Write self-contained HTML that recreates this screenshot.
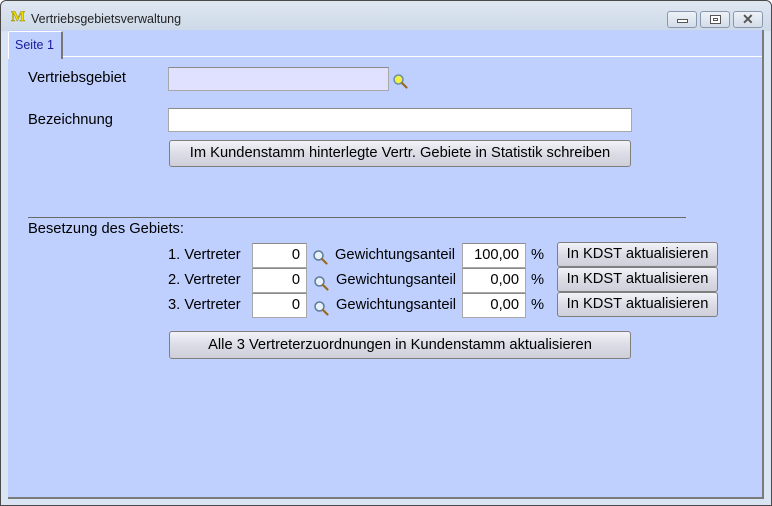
<!DOCTYPE html>
<html><head><meta charset="utf-8"><style>
*{margin:0;padding:0;box-sizing:border-box}
body{width:772px;height:506px;overflow:hidden;font-family:"Liberation Sans",Arial,sans-serif;font-size:14.7px;color:#000;background:#fff}
.win{position:absolute;left:0;top:0;width:772px;height:506px;border:1px solid #4a4a4a;border-radius:6px 6px 0 0;background:#dae5f3}
.title{position:absolute;left:0;top:0;width:770px;height:30px;background:linear-gradient(#dfe7f1,#cdd9e8);border-radius:6px 6px 0 0}
.title span{position:absolute;left:30px;top:11px;font-size:12.5px;color:#222}
.logo{position:absolute;left:10px;top:8px;font-family:"Liberation Serif",serif;font-weight:bold;font-size:15px;color:#f0e000;-webkit-text-stroke:.5px #998800}
.tb{position:absolute;top:10px;width:30px;height:17px;border:1px solid #8a98ad;border-radius:3px;background:linear-gradient(#eef2f8,#d3dce8)}
.a{position:absolute}
.panel{position:absolute;left:8px;top:30px;width:756px;height:469px;background:#bfd0ff;border-right:2px solid #7a7a7a;border-bottom:2px solid #7a7a7a}
.hdr{position:absolute;left:0;top:0;width:754px;height:27px;border-bottom:1px solid #fff}
.tab{position:absolute;left:0;top:1px;width:55px;height:28px;background:#bfd0ff;border-left:1px solid #fff;border-top:1px solid #fff;border-right:2px solid #777;border-radius:2px 2px 0 0}
.tab span{position:absolute;left:6px;top:6px;font-size:12.5px;color:#1a1a9a}
.inp{position:absolute;background:#fff;border:1px solid #a8a8a8;border-top-color:#8a8a8a;text-align:right;padding-right:6px;line-height:22px}
.btn{position:absolute;border:1px solid #7e7e7e;border-radius:3px;background:linear-gradient(#f2f2f8,#dcdce6 50%,#cfcfda);text-align:center;line-height:24px}
.mag{position:absolute;width:16px;height:16px}
</style></head><body>
<div class="win">
<div class="title"><div class="logo">M</div><span>Vertriebsgebietsverwaltung</span>
<div class="tb" style="left:666px"><div class="a" style="left:9px;top:7px;width:11px;height:4px;border:1px solid #555;background:#fff"></div></div>
<div class="tb" style="left:699px"><div class="a" style="left:9px;top:3px;width:11px;height:9px;border:1px solid #555;background:#fff"><div class="a" style="left:2px;top:2px;width:5px;height:3px;border:1px solid #555"></div></div></div>
<div class="tb" style="left:732px"><span style="position:absolute;left:8px;top:-1px;font-size:14px;color:#555;font-weight:bold">✕</span></div>
</div>
</div>
<div class="panel">
<div class="hdr"></div>
<div class="tab"><span>Seite 1</span></div>
</div>
<div class="a" style="left:28px;top:70px">Vertriebsgebiet</div>
<div class="inp" style="left:168px;top:67px;width:221px;height:24px;background:#e0e0ff"></div>
<svg class="mag" style="left:392px;top:73px" viewBox="0 0 16 16"><circle cx="6.5" cy="6.5" r="4.5" fill="#f2f040" stroke="#6b8ca8" stroke-width="1.5"/><path d="M10 10l4.5 4.5" stroke="#9a6a20" stroke-width="2.2" stroke-linecap="round"/></svg>
<div class="a" style="left:28px;top:112px">Bezeichnung</div>
<div class="inp" style="left:168px;top:108px;width:464px;height:24px"></div>
<div class="btn" style="left:169px;top:140px;width:462px;height:27px;line-height:25px">Im Kundenstamm hinterlegte Vertr. Gebiete in Statistik schreiben</div>
<div class="a" style="left:28px;top:217px;width:658px;height:1px;background:#6a6a6a"></div>
<div class="a" style="left:28px;top:221px">Besetzung des Gebiets:</div>

<div class="a" style="left:168px;top:247px">1. Vertreter</div>
<div class="inp" style="left:252px;top:243px;width:55px;height:25px">0</div>
<svg class="mag" style="left:312px;top:249px" viewBox="0 0 16 16"><circle cx="6.5" cy="6.5" r="4.5" fill="#e8f0f8" stroke="#5a7a98" stroke-width="1.5"/><path d="M10 10l4.5 4.5" stroke="#9a6a20" stroke-width="2.2" stroke-linecap="round"/></svg>
<div class="a" style="left:335px;top:247px">Gewichtungsanteil</div>
<div class="inp" style="left:462px;top:243px;width:64px;height:25px">100,00</div>
<div class="a" style="left:531px;top:247px">%</div>
<div class="btn" style="left:557px;top:242px;width:161px;height:25px;line-height:23px">In KDST aktualisieren</div>

<div class="a" style="left:168px;top:272px">2. Vertreter</div>
<div class="inp" style="left:252px;top:268px;width:55px;height:25px">0</div>
<svg class="mag" style="left:313px;top:275px" viewBox="0 0 16 16"><circle cx="6.5" cy="6.5" r="4.5" fill="#e8f0f8" stroke="#5a7a98" stroke-width="1.5"/><path d="M10 10l4.5 4.5" stroke="#9a6a20" stroke-width="2.2" stroke-linecap="round"/></svg>
<div class="a" style="left:336px;top:272px">Gewichtungsanteil</div>
<div class="inp" style="left:462px;top:268px;width:64px;height:25px">0,00</div>
<div class="a" style="left:531px;top:272px">%</div>
<div class="btn" style="left:557px;top:267px;width:161px;height:25px;line-height:23px">In KDST aktualisieren</div>

<div class="a" style="left:168px;top:297px">3. Vertreter</div>
<div class="inp" style="left:252px;top:293px;width:55px;height:25px">0</div>
<svg class="mag" style="left:313px;top:300px" viewBox="0 0 16 16"><circle cx="6.5" cy="6.5" r="4.5" fill="#e8f0f8" stroke="#5a7a98" stroke-width="1.5"/><path d="M10 10l4.5 4.5" stroke="#9a6a20" stroke-width="2.2" stroke-linecap="round"/></svg>
<div class="a" style="left:336px;top:297px">Gewichtungsanteil</div>
<div class="inp" style="left:462px;top:293px;width:64px;height:25px">0,00</div>
<div class="a" style="left:531px;top:297px">%</div>
<div class="btn" style="left:557px;top:292px;width:161px;height:25px;line-height:23px">In KDST aktualisieren</div>

<div class="btn" style="left:169px;top:331px;width:462px;height:28px;line-height:26px">Alle 3 Vertreterzuordnungen in Kundenstamm aktualisieren</div>
</body></html>
